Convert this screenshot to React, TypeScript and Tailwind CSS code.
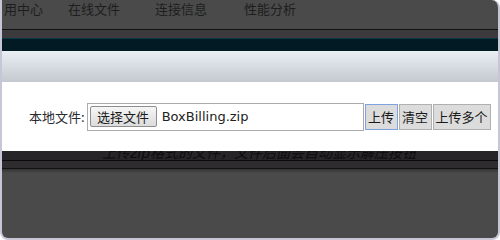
export default function App() {
  const cjk = { fontFamily: '"Noto Sans CJK SC", "DejaVu Sans", sans-serif' };
  const mixed = { fontFamily: '"DejaVu Sans", "Noto Sans CJK SC", sans-serif' };

  return (
    <div className="w-[500px] h-[240px] overflow-hidden">
      <div className="w-full h-full flex flex-col overflow-hidden bg-[#4a4a4a] border-x-[2px] border-b-[2px] border-[#c6c6d6] rounded-tr-[8px] rounded-b-[8px]">
        {/* Nav (dimmed by overlay) */}
        <div className="h-[29px] flex items-start text-[13px] leading-[16px] text-[#1e1e1e] pl-[2px] pt-[1px]" style={cjk}>
          <span>用中心</span>
          <span className="ml-[25px]">在线文件</span>
          <span className="ml-[35px]">连接信息</span>
          <span className="ml-[37px]">性能分析</span>
        </div>
        <div className="h-[1px] bg-[#121212]" />
        <div className="h-[8px] bg-[#3c3a3c]" />
        <div className="h-[1px] bg-[#0d3a47]" />
        <div className="h-[12px] bg-[#011a23]" />

        {/* Modal */}
        <div className="flex flex-col">
          <div className="h-[31px] bg-gradient-to-b from-[#e9eff3] to-[#c3c9cf]" />
          <div className="h-[69px] bg-white flex items-center pl-[27px]">
            <span className="text-[13px] text-[#2a2a30] mr-[2px]" style={cjk}>本地文件:</span>
            <div className="w-[277px] h-[28px] border border-[#ababab] bg-white flex items-center pl-[2px]">
              <button
                className="h-[21px] w-[67px] rounded-[2px] border border-[#8e8e8e] bg-gradient-to-b from-[#f6f6f6] to-[#dcdcdc] text-[13px] leading-[19px] text-[#1a1a1a]"
                style={cjk}
              >
                选择文件
              </button>
              <span className="ml-[5px] text-[13px] text-[#222]" style={mixed}>BoxBilling.zip</span>
            </div>
            <button
              className="ml-[1px] h-[26px] w-[33px] border border-[#7ea2e0] bg-[#dcdcdc] text-[13px] leading-[24px] text-[#1a1a1a]"
              style={cjk}
            >
              上传
            </button>
            <button
              className="ml-[1px] h-[26px] w-[33px] border border-[#b0b0b0] bg-[#dcdcdc] text-[13px] leading-[24px] text-[#1a1a1a]"
              style={cjk}
            >
              清空
            </button>
            <button
              className="ml-[1px] h-[26px] w-[58px] border border-[#b0b0b0] bg-[#dcdcdc] text-[13px] leading-[24px] text-[#1a1a1a]"
              style={cjk}
            >
              上传多个
            </button>
          </div>
        </div>

        {/* Content behind overlay, partly hidden */}
        <div className="h-[9px] bg-[#272527] overflow-hidden">
          <div className="mt-[-6px] pl-[100px] text-[14px] leading-[16px] italic text-[#0c0c0c] whitespace-nowrap" style={mixed}>
            上传zip格式的文件，文件后面会自动显示解压按钮
          </div>
        </div>
        <div className="h-[1px] bg-[#0a0a0a]" />
        <div className="h-[7px] bg-[#2e2c2e]" />
        <div className="h-[1px] bg-[#111]" />
        <div className="h-[4px] bg-gradient-to-b from-[#333] to-[#4a4a4a]" />
        <div className="flex-1" />
      </div>
    </div>
  );
}
